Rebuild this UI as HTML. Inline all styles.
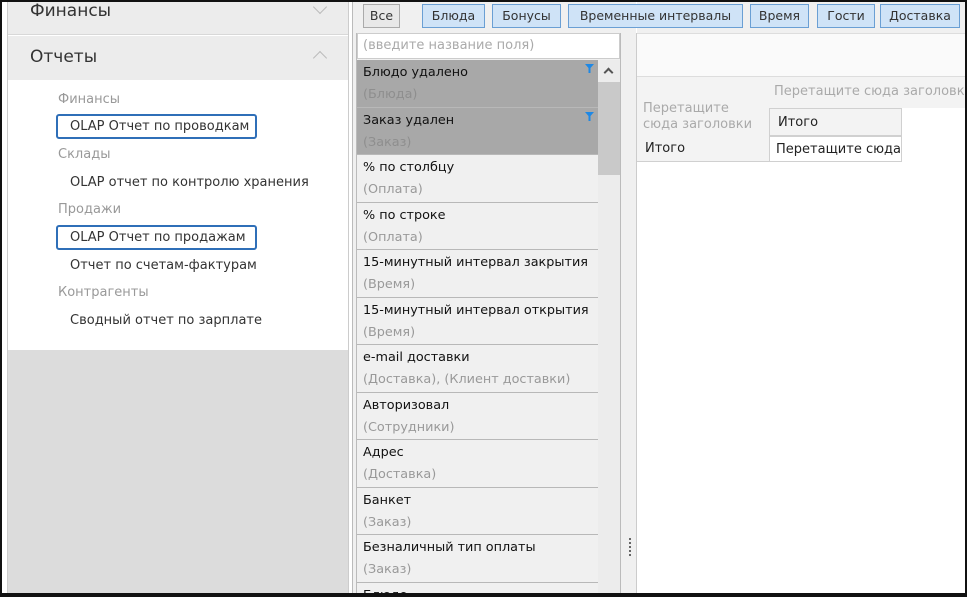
<!DOCTYPE html>
<html><head><meta charset="utf-8"><style>
*{box-sizing:border-box;margin:0;padding:0}
html,body{width:967px;height:597px;overflow:hidden}
body{background:#fff;font-family:"DejaVu Sans","Liberation Sans",sans-serif;font-size:13px;color:#222;position:relative}
.abs{position:absolute}
.frame{position:absolute;left:0;top:0;width:967px;height:597px;border:2px solid #111;border-bottom-width:4px;pointer-events:none;z-index:10}
.tab{position:absolute;top:4px;height:24px;border:1px solid #6a9fd4;background:#cfe3f7;font-size:12.5px;line-height:22px;text-align:center;color:#333;z-index:3;white-space:nowrap}
.item{position:absolute;left:357px;width:241px;height:47.5px;border-bottom:1.5px solid #b8b8b8;background:#f0f0f0;padding-left:6px;overflow:hidden}
.item .t{position:absolute;top:5px;left:6px;font-size:12.8px;color:#111;white-space:nowrap}
.item .s{position:absolute;top:27px;left:6px;font-size:12.8px;color:#999;white-space:nowrap}
.item.sel{background:#a8a8a8}
.item.sel .s{color:#8e8e8e}
.lnk{position:absolute;left:70px;font-size:13px;color:#333;white-space:nowrap}
.grp{position:absolute;left:58px;font-size:13px;color:#999}
.box{position:absolute;left:56px;width:201px;height:25px;border:2px solid #2f6fb8;border-radius:3px}
.clip{position:absolute;left:0;top:0;width:967px;height:597px;overflow:hidden}
</style></head><body><div class="clip">
<div class="abs" style="left:8px;top:0;width:340px;height:35px;background:#ececec;border-bottom:1px solid #d8d8d8"></div>
<div class="abs" style="left:30px;top:1px;font-size:17px;color:#333">Финансы</div>
<div class="abs" style="left:315px;top:2px;width:10px;height:10px;border-right:1.5px solid #bbb;border-bottom:1.5px solid #bbb;transform:rotate(45deg)"></div>
<div class="abs" style="left:8px;top:36px;width:340px;height:44px;background:#ececec"></div>
<div class="abs" style="left:30px;top:47px;font-size:17px;color:#333">Отчеты</div>
<div class="abs" style="left:315px;top:53px;width:10px;height:10px;border-left:1.5px solid #bbb;border-top:1.5px solid #bbb;transform:rotate(45deg)"></div>
<div class="abs" style="left:8px;top:350px;width:340px;height:245px;background:#dcdcdc"></div>
<div class="abs" style="left:7px;top:0;width:1px;height:595px;background:#ccc"></div>
<div class="abs" style="left:348px;top:0;width:1px;height:595px;background:#ccc"></div>
<div class="abs" style="left:352px;top:0;width:1px;height:595px;background:#bbb"></div>
<div class="grp" style="top:92px">Финансы</div>
<div class="box" style="top:114px"></div>
<div class="lnk" style="top:119px">OLAP Отчет по проводкам</div>
<div class="grp" style="top:147px">Склады</div>
<div class="lnk" style="top:175px">OLAP отчет по контролю хранения</div>
<div class="grp" style="top:202px">Продажи</div>
<div class="box" style="top:225px"></div>
<div class="lnk" style="top:230px">OLAP Отчет по продажам</div>
<div class="lnk" style="top:258px">Отчет по счетам-фактурам</div>
<div class="grp" style="top:285px">Контрагенты</div>
<div class="lnk" style="top:313px">Сводный отчет по зарплате</div>
<div class="abs" style="left:353px;top:0;width:283px;height:597px;background:#f0f0f0"></div>
<div class="tab" style="left:363px;width:37px;background:#e8e8e8;border-color:#aaa">Все</div>
<div class="tab" style="left:422px;width:63px">Блюда</div>
<div class="tab" style="left:492px;width:69px">Бонусы</div>
<div class="abs" style="left:357px;top:33px;width:263px;height:26px;background:#fff;border:1px solid #ccc;padding:4px 5px;color:#aaa;font-size:13px">(введите название поля)</div>
<div class="abs" style="left:356px;top:33px;width:1px;height:564px;background:#bbb"></div>
<div class="abs" style="left:620px;top:33px;width:1px;height:564px;background:#bbb"></div>
<div class="item sel" style="top:60px"><span class="t">Блюдо удалено</span><span class="s">(Блюда)</span><svg class="abs" style="right:4px;top:4px" width="9" height="9" viewBox="0 0 9 9"><path d="M0 0H9L5.5 4V9H3.5V4Z" fill="#1e88e5"/></svg></div>
<div class="item sel" style="top:107.5px"><span class="t">Заказ удален</span><span class="s">(Заказ)</span><svg class="abs" style="right:4px;top:4px" width="9" height="9" viewBox="0 0 9 9"><path d="M0 0H9L5.5 4V9H3.5V4Z" fill="#1e88e5"/></svg></div>
<div class="item" style="top:155px"><span class="t">% по столбцу</span><span class="s">(Оплата)</span></div>
<div class="item" style="top:202.5px"><span class="t">% по строке</span><span class="s">(Оплата)</span></div>
<div class="item" style="top:250px"><span class="t">15-минутный интервал закрытия</span><span class="s">(Время)</span></div>
<div class="item" style="top:297.5px"><span class="t">15-минутный интервал открытия</span><span class="s">(Время)</span></div>
<div class="item" style="top:345px"><span class="t">e-mail доставки</span><span class="s">(Доставка), (Клиент доставки)</span></div>
<div class="item" style="top:392.5px"><span class="t">Авторизовал</span><span class="s">(Сотрудники)</span></div>
<div class="item" style="top:440px"><span class="t">Адрес</span><span class="s">(Доставка)</span></div>
<div class="item" style="top:487.5px"><span class="t">Банкет</span><span class="s">(Заказ)</span></div>
<div class="item" style="top:535px"><span class="t">Безналичный тип оплаты</span><span class="s">(Заказ)</span></div>
<div class="item" style="top:582.5px;height:14px;border-bottom:none"><span class="t">Блюдо</span></div>
<div class="abs" style="left:598px;top:60px;width:22px;height:537px;background:#ececec"></div>
<div class="abs" style="left:598px;top:82px;width:22px;height:93px;background:#c9c9c9"></div>
<div class="abs" style="left:605px;top:69px;width:7px;height:7px;border-left:2px solid #555;border-top:2px solid #555;transform:rotate(45deg)"></div>
<div class="abs" style="left:629px;top:538px;width:2px;height:18px;background:repeating-linear-gradient(#666 0 2px,transparent 2px 4px)"></div>
<div class="abs" style="left:636px;top:33px;width:331px;height:564px;background:#fff;border-left:1px solid #ccc"></div>
<div class="abs" style="left:637px;top:0;width:330px;height:33px;background:#f0f0f0"></div>
<div class="abs" style="left:637px;top:33px;width:330px;height:1px;background:#ddd"></div>
<div class="abs" style="left:637px;top:34px;width:330px;height:42px;background:#fafafa"></div>
<div class="abs" style="left:637px;top:76px;width:330px;height:32px;background:#f3f3f3;border-top:1px solid #ddd"></div>
<div class="abs" style="left:774px;top:84px;color:#aaa;font-size:13px;white-space:nowrap">Перетащите сюда заголовки</div>
<div class="abs" style="left:637px;top:108px;width:132px;height:28px;background:#f3f3f3"></div>
<div class="abs" style="left:643px;top:101px;color:#aaa;font-size:13px;line-height:16px">Перетащите<br>сюда заголовки</div>
<div class="abs" style="left:769px;top:108px;width:133px;height:28px;background:#f3f3f3;border:1px solid #d0d0d0;padding:6px 8px">Итого</div>
<div class="abs" style="left:637px;top:136px;width:265px;height:26px;border:1px solid #d0d0d0;border-left:none"></div>
<div class="abs" style="left:637px;top:136px;width:132px;height:26px;background:#f3f3f3;padding:5px 8px;border-bottom:1px solid #d0d0d0">Итого</div>
<div class="abs" style="left:769px;top:136px;width:133px;height:26px;border:1px solid #d0d0d0;padding:5px 6px;white-space:nowrap">Перетащите сюда</div>
<div class="tab" style="left:568px;width:175px">Временные интервалы</div>
<div class="tab" style="left:750px;width:59px">Время</div>
<div class="tab" style="left:817px;width:58px">Гости</div>
<div class="tab" style="left:880px;width:80px">Доставка</div>
</div>
<div class="frame"></div>
</body></html>
